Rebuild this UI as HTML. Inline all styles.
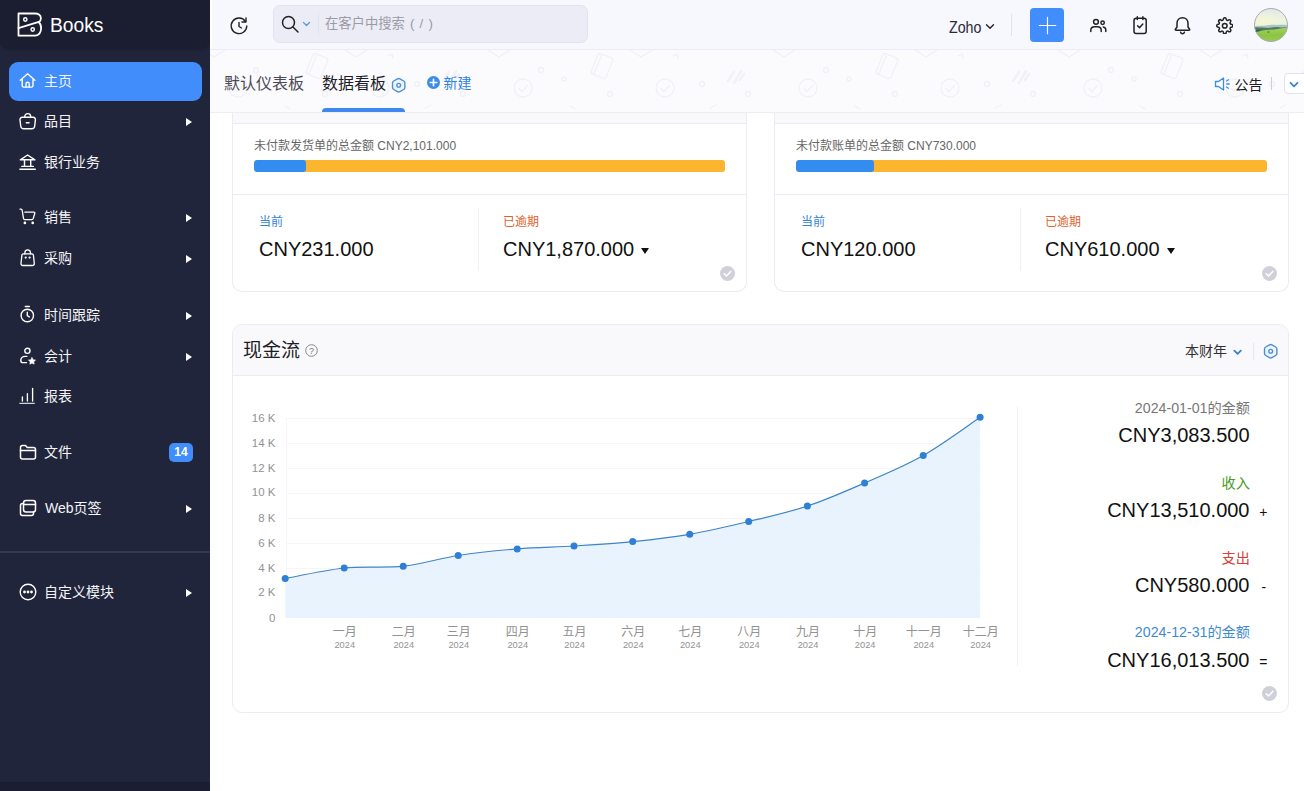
<!DOCTYPE html>
<html lang="zh-CN">
<head>
<meta charset="utf-8">
<title>Books</title>
<style>
*{box-sizing:border-box;margin:0;padding:0}
html,body{width:1304px;height:791px;overflow:hidden;background:#fff}
body{font-family:"Liberation Sans","Noto Sans CJK SC",sans-serif;color:#21263c;position:relative;font-size:13px}
.abs{position:absolute}
/* sidebar */
#side{position:absolute;left:0;top:0;width:210px;height:791px;background:#21253b}
#side .hd{position:absolute;left:0;top:0;width:210px;height:48px;background:#1b1d31;border-radius:0 0 8px 8px;box-shadow:0 1px 3px rgba(0,0,0,.25)}
#side .logo{position:absolute;left:17px;top:12px}
#side .brand{position:absolute;left:50.400px;top:12.500px;font-size:20px;line-height:24px;color:#fff;transform:scaleX(.962);transform-origin:0 0}
.mi{position:absolute;left:9px;width:193px;height:39px;border-radius:9px;color:#f4f4f8;font-size:14px;line-height:38px}
.mi.on{background:#408dfb}
.mi .ic{position:absolute;left:9px;top:9px;width:20px;height:20px}
.mi .tx{position:absolute;left:35px;top:0;white-space:nowrap}
.mi .ar{position:absolute;left:176.500px;top:16px;width:0;height:0;border-left:6px solid #fff;border-top:4px solid transparent;border-bottom:4px solid transparent}
.mi .bd{position:absolute;left:160px;top:9.700px;width:24px;height:19.500px;border-radius:5px;background:#408dfb;color:#fff;font-size:12px;font-weight:bold;line-height:19px;text-align:center}
#side .sep{position:absolute;left:0;top:551px;width:210px;height:2px;background:#353a53}
#side .ft{position:absolute;left:0;top:782px;width:210px;height:9px;background:#1b1d30}
/* topbar */
#top{position:absolute;left:210px;top:0;width:1094px;height:50px;background:#f7f7fe;border-bottom:1px solid #ececf6;box-shadow:inset 2px 0 0 #fff}
#search{position:absolute;left:63px;top:5px;width:315px;height:38px;background:#ececf7;border:1px solid #e2e2f0;border-radius:7px}
#search .ph{position:absolute;left:51px;top:0;line-height:36px;font-size:13.300px;color:#9a9aa3;white-space:nowrap;word-spacing:1.500px}
#search .dv{position:absolute;left:44px;top:7px;width:1px;height:22px;background:#e2e2ee}
/* tabbar */
#tabs{position:absolute;z-index:2;left:210px;top:50px;width:1094px;height:63px;background:#fbfbfe;border-bottom:1px solid #ededf4}
.tab{position:absolute;top:23px;font-size:16px;line-height:22px;white-space:nowrap;color:#444}
/* cards */
.card{position:absolute;background:#fff;border:1px solid #ebebf3;border-radius:0 0 10px 10px}
.lbl{position:absolute;font-size:12px;line-height:16px;white-space:nowrap}
.amt{position:absolute;font-size:20px;line-height:24px;white-space:nowrap;color:#111}
.bar{position:absolute;height:12px;background:#fbb52f;border-radius:3px;overflow:hidden}
.bar i{position:absolute;left:0;top:0;height:12px;background:#338cf0;display:block;border-radius:3px}
.chk{position:absolute;width:15px;height:15px}
.r{position:absolute;right:54px;white-space:nowrap;text-align:right}
</style>
</head>
<body>

<!-- ============ SIDEBAR ============ -->
<div id="side">
  <div class="hd">
    <svg class="logo" width="26" height="26" viewBox="0 0 26 26" fill="none" stroke="#fff" stroke-width="1.800" stroke-linejoin="round" stroke-linecap="round">
      <path d="M1.500 1.500H18C21.500 1.500 23.900 3.400 23.900 6.200C23.900 8 23.100 9.400 21.800 10.300C23.300 11.500 24.100 13.500 24.100 16.300C24.100 20.500 21.600 23.700 18.200 23.700H1.500z"/>
      <path d="M1.500 16.200 21.800 9.900"/>
      <circle cx="8.300" cy="7.500" r="1.650" stroke-width="1.500"/>
      <circle cx="15.700" cy="17.500" r="1.650" stroke-width="1.500"/>
    </svg>
    <div class="brand">Books</div>
  </div>

  <div class="mi on" style="top:62px"><svg class="ic" viewBox="0 0 20 20" fill="none" stroke="#fff" stroke-width="1.400" stroke-linejoin="round" stroke-linecap="round"><path d="M2.300 9.200 9.600 2.800l7.300 6.400M4.200 7.800v6.700c0 1 .6 1.600 1.600 1.600h7.600c1 0 1.600-.6 1.600-1.600V7.800"/><path d="M8 16v-3.200a1.600 1.600 0 0 1 3.200 0V16"/></svg><span class="tx">主页</span></div>

  <div class="mi" style="top:102px"><svg class="ic" viewBox="0 0 20 20" fill="none" stroke="#fff" stroke-width="1.400" stroke-linejoin="round" stroke-linecap="round"><path d="M4.300 6.300h10.800c1.500 0 2.400 1 2.300 2.400l-.7 6.300c-.2 1.700-1.300 2.800-3 2.800H5.700c-1.700 0-2.800-1.100-3-2.800L2 8.700C1.900 7.300 2.800 6.300 4.300 6.300z"/><path d="M6.600 6.300c0-2.300 1.300-3.700 3.100-3.700s3.100 1.400 3.100 3.700M8.300 11.800h2.800"/></svg><span class="tx">品目</span><span class="ar"></span></div>

  <div class="mi" style="top:143px"><svg class="ic" viewBox="0 0 20 20" fill="none" stroke="#fff" stroke-width="1.400" stroke-linejoin="round" stroke-linecap="round"><path d="M2.300 7.800 9.600 3l7.300 4.800zM1.900 17.200h15.400M6.500 8v6.300M12.700 8v6.300M3.800 14.400h11.600"/></svg><span class="tx">银行业务</span></div>

  <div class="mi" style="top:198px"><svg class="ic" viewBox="0 0 20 20" fill="none" stroke="#fff" stroke-width="1.300" stroke-linejoin="round" stroke-linecap="round"><path d="M2 2.200h1c.7 0 1.100.4 1.200 1.100l1.300 8.200c.1.700.6 1.100 1.300 1.100h7.100c.7 0 1.100-.4 1.300-1l1.600-5.400c.2-.7-.2-1.100-.9-1.100H6.800"/><circle cx="6.900" cy="15.900" r=".7"/><circle cx="14.700" cy="15.900" r=".7"/></svg><span class="tx">销售</span><span class="ar"></span></div>

  <div class="mi" style="top:239px"><svg class="ic" viewBox="0 0 20 20" fill="none" stroke="#fff" stroke-width="1.300" stroke-linejoin="round" stroke-linecap="round"><path d="M5.300 5.900h8.700c.8 0 1.300.5 1.400 1.200l.9 8.300c.1 1.300-.7 2.100-2 2.100H5c-1.300 0-2.100-.8-2-2.100l.9-8.300c.1-.7.600-1.200 1.400-1.200z"/><path d="M6.800 5.900v-.8c0-1.900 1.200-3.200 2.850-3.200s2.850 1.300 2.850 3.200v.8"/><circle cx="7.700" cy="9.600" r=".45" fill="#fff"/><circle cx="11.600" cy="9.600" r=".45" fill="#fff"/></svg><span class="tx">采购</span><span class="ar"></span></div>

  <div class="mi" style="top:296px"><svg class="ic" viewBox="0 0 20 20" fill="none" stroke="#fff" stroke-width="1.400" stroke-linejoin="round" stroke-linecap="round"><circle cx="9.300" cy="10.500" r="6.200"/><path d="M9.300 7.200v3.500l2 1.200M7.300 1.500h4"/></svg><span class="tx">时间跟踪</span><span class="ar"></span></div>

  <div class="mi" style="top:337px"><svg class="ic" viewBox="0 0 20 20" fill="none" stroke="#fff" stroke-width="1.400" stroke-linejoin="round" stroke-linecap="round"><circle cx="9.400" cy="4.800" r="2.600"/><path d="M8.800 10.400H7.200c-2.700 0-4.400 1.800-4.400 4 0 1.400.8 2.200 2.200 2.200h3.500"/><path d="M14 11.600l1.100 2.200 2.400.3-1.750 1.700.4 2.400-2.150-1.150-2.150 1.150.4-2.400-1.750-1.700 2.400-.3z" fill="#fff" stroke="#fff" stroke-width=".6"/></svg><span class="tx">会计</span><span class="ar"></span></div>

  <div class="mi" style="top:377px"><svg class="ic" viewBox="0 0 20 20" fill="none" stroke="#fff" stroke-width="1.350" stroke-linecap="round"><path d="M4.400 10.800v4.200M9.400 7.700v7.300M14.600 2.400v12.600"/><path d="M1.800 17.300h14.600" stroke-width="1"/></svg><span class="tx">报表</span></div>

  <div class="mi" style="top:433px"><svg class="ic" viewBox="0 0 20 20" fill="none" stroke="#fff" stroke-width="1.500" stroke-linejoin="round" stroke-linecap="round"><path d="M2.500 8.500V5.500c0-1.200.8-2 2-2h3l1.800 2h6.200c1.200 0 2 .8 2 2v7.500c0 1.200-.8 2-2 2h-11c-1.200 0-2-.8-2-2z"/><path d="M2.500 8.500h15"/></svg><span class="tx">文件</span><span class="bd">14</span></div>

  <div class="mi" style="top:489px"><svg class="ic" viewBox="0 0 20 20" fill="none" stroke="#fff" stroke-width="1.500" stroke-linejoin="round" stroke-linecap="round"><rect x="5.500" y="2.500" width="12" height="11.500" rx="2.500"/><path d="M5.500 6.500h12M5.500 5.500h-1c-1.200 0-2 .8-2 2v8c0 1.200.8 2 2 2h9c1.200 0 2-.8 2-2v-1.500"/></svg><span class="tx" style="left:36px">Web页签</span><span class="ar"></span></div>

  <div class="sep"></div>

  <div class="mi" style="top:573px"><svg class="ic" viewBox="0 0 20 20" fill="none" stroke="#fff" stroke-width="1.400" stroke-linejoin="round" stroke-linecap="round"><circle cx="10" cy="10" r="7.800"/><circle cx="6.500" cy="10" r=".7" fill="#fff"/><circle cx="10" cy="10" r=".7" fill="#fff"/><circle cx="13.500" cy="10" r=".7" fill="#fff"/></svg><span class="tx">自定义模块</span><span class="ar"></span></div>

  <div class="ft"></div>
</div>

<!-- ============ TOPBAR ============ -->
<div id="top">
  <svg class="abs" style="left:19px;top:16px" width="20" height="20" viewBox="0 0 20 20" fill="none" stroke="#222" stroke-width="1.400" stroke-linecap="round" stroke-linejoin="round"><path d="M16.500 5.500A7.800 7.800 0 1 0 17.800 10"/><path d="M17 2v4h-4M10 6.500V10.500l2.500 1.500"/></svg>
  <div id="search">
    <svg class="abs" style="left:6px;top:8px" width="20" height="20" viewBox="0 0 20 20" fill="none" stroke="#222" stroke-width="1.500" stroke-linecap="round"><circle cx="8.500" cy="8.500" r="6"/><path d="M13 13l5 5"/></svg>
    <svg class="abs" style="left:28px;top:15px" width="9" height="7" viewBox="0 0 9 7" fill="none" stroke="#5b9bdc" stroke-width="1.400" stroke-linecap="round" stroke-linejoin="round"><path d="M1.500 1.500l3 3 3-3"/></svg>
    <div class="dv"></div>
    <div class="ph">在客户中搜索 ( / )</div>
  </div>
  <div class="abs" style="left:739px;top:17.500px;font-size:16px;line-height:20px;color:#2a2a33;white-space:nowrap;transform:scaleX(.89);transform-origin:0 0">Zoho</div>
  <svg class="abs" style="left:775px;top:23px" width="10" height="8" viewBox="0 0 10 8" fill="none" stroke="#222" stroke-width="1.400" stroke-linecap="round" stroke-linejoin="round"><path d="M1.500 1.800l3.500 3.500 3.500-3.500"/></svg>
  <div class="abs" style="left:801px;top:14px;width:1px;height:22px;background:#e3e3ee"></div>
  <div class="abs" style="left:820px;top:8px;width:34px;height:34px;border-radius:4px;background:#408dfb">
    <svg class="abs" style="left:6.500px;top:6.500px" width="21" height="21" viewBox="0 0 21 21" stroke="#fff" stroke-width="1.150" stroke-linecap="round"><path d="M10.500 2.200v16.600M2.200 10.500h16.600"/></svg>
  </div>
  <!-- users -->
  <svg class="abs" style="left:878px;top:15px" width="20" height="20" viewBox="0 0 20 20" fill="none" stroke="#222" stroke-width="1.500" stroke-linecap="round" stroke-linejoin="round"><circle cx="8" cy="6.800" r="2.400"/><path d="M2.800 16.500v-1.200c0-2.100 1.700-3.600 3.800-3.600h2.800c2.100 0 3.800 1.500 3.800 3.600v1.200"/><circle cx="14.600" cy="7.800" r="1.700"/><path d="M15.300 12c1.500.3 2.500 1.400 2.500 2.900v1.600"/></svg>
  <!-- clipboard -->
  <svg class="abs" style="left:920px;top:14px" width="20" height="22" viewBox="0 0 20 22" fill="none" stroke="#222" stroke-width="1.500" stroke-linecap="round" stroke-linejoin="round"><rect x="4" y="4.300" width="12.200" height="15.200" rx="2.300"/><path d="M7.300 2.800v2.600M12.900 2.800v2.600M7.600 11.800l1.900 1.900 3.300-3.700"/></svg>
  <!-- bell -->
  <svg class="abs" style="left:962px;top:14px" width="20" height="22" viewBox="0 0 20 22" fill="none" stroke="#222" stroke-width="1.500" stroke-linecap="round" stroke-linejoin="round"><path d="M5 13V9.500c0-3.300 2.200-5.800 5.500-5.800S16 6.200 16 9.500V13l1.600 2.200c.3.500 0 1-.6 1H4c-.6 0-.9-.5-.6-1z"/><path d="M8.600 18.200c.3 1 1 1.500 1.900 1.500s1.600-.5 1.900-1.500"/></svg>
  <!-- gear -->
  <svg class="abs" style="left:1005.500px;top:16.500px" width="17.500" height="17.500" viewBox="0 0 24 24" fill="none" stroke="#222" stroke-width="2.050" stroke-linecap="round" stroke-linejoin="round"><circle cx="12" cy="12" r="3.200"/><path d="M19.400 15a1.650 1.650 0 0 0 .33 1.820l.06.06a2 2 0 1 1-2.830 2.830l-.06-.06a1.650 1.650 0 0 0-1.820-.33 1.650 1.650 0 0 0-1 1.510V21a2 2 0 0 1-4 0v-.09A1.650 1.650 0 0 0 9 19.400a1.650 1.650 0 0 0-1.820.33l-.06.06a2 2 0 1 1-2.830-2.830l.06-.06a1.650 1.650 0 0 0 .33-1.820 1.650 1.650 0 0 0-1.510-1H3a2 2 0 0 1 0-4h.09A1.650 1.650 0 0 0 4.600 9a1.650 1.650 0 0 0-.33-1.820l-.06-.06a2 2 0 1 1 2.830-2.830l.06.06a1.650 1.650 0 0 0 1.820.33H9a1.650 1.650 0 0 0 1-1.510V3a2 2 0 0 1 4 0v.09a1.650 1.650 0 0 0 1 1.510 1.650 1.650 0 0 0 1.820-.33l.06-.06a2 2 0 1 1 2.830 2.830l-.06.06a1.650 1.650 0 0 0-.33 1.820V9a1.650 1.650 0 0 0 1.510 1H21a2 2 0 0 1 0 4h-.09a1.650 1.650 0 0 0-1.510 1z"/></svg>
  <!-- avatar -->
  <svg class="abs" style="left:1044px;top:7.500px" width="34" height="34" viewBox="0 0 34 34">
    <defs>
      <clipPath id="avc"><circle cx="17" cy="17" r="16.500"/></clipPath>
      <linearGradient id="sky" x1="0" y1="0" x2="0" y2="1"><stop offset="0" stop-color="#dfe8ec"/><stop offset=".55" stop-color="#eef3de"/><stop offset="1" stop-color="#e6efe2"/></linearGradient>
      <linearGradient id="grs" x1="0" y1="0" x2="0" y2="1"><stop offset="0" stop-color="#a6d25c"/><stop offset=".5" stop-color="#8cc443"/><stop offset="1" stop-color="#9fcd58"/></linearGradient>
      <radialGradient id="sun" cx=".3" cy=".8" r=".6"><stop offset="0" stop-color="#f6f7cf" stop-opacity=".9"/><stop offset="1" stop-color="#f6f7cf" stop-opacity="0"/></radialGradient>
    </defs>
    <g clip-path="url(#avc)">
      <rect width="34" height="20" fill="url(#sky)"/>
      <rect width="34" height="20" fill="url(#sun)"/>
      <g transform="translate(0,1.200)">
      <path d="M0 17.500c4-1.200 7-.6 10-.9s6-1.300 10-1 8-.4 14 .4V21H0z" fill="#a9c4c8"/>
      <path d="M0 18.200c3-.6 5 .2 8 .1s5 .6 8 .3 6-1 9-.6 5 .2 9-.2V23H0z" fill="#4d7a5e"/>
      <path d="M0 24c5-2.500 10-3.200 16-3.500s12-1.300 18-2.500V34H0z" fill="url(#grs)"/>
      <path d="M0 21.500c2-.8 5-1 8-.9l-8 3z" fill="#2f6048"/>
      <rect x="13.500" y="22.300" width="1.800" height="1" fill="#3c5a3a"/>
      </g>
    </g>
    <circle cx="17" cy="17" r="16.500" fill="none" stroke="#a9abb3" stroke-width="1"/>
  </svg>
</div>

<!-- ============ TAB BAR ============ -->
<div id="tabs">
  <svg class="abs" style="left:0;top:0" width="1094" height="62" viewBox="0 0 1094 62" fill="none" stroke="#f0f0f7" stroke-width="1.300" stroke-linecap="round" stroke-linejoin="round">
    <defs>
      <pattern id="doodle" x="-25" y="0" width="285" height="62" patternUnits="userSpaceOnUse">
        <circle cx="53" cy="38" r="9"/><path d="M49 38.500l3 3 5.500-6"/>
        <circle cx="195" cy="38" r="9"/><path d="M191 38.500l3 3 5.500-6"/>
        <path d="M15 -2l14 9 14-9M157 -2l14 9 14-9"/>
        <rect x="124" y="5" width="16" height="22" rx="2.500" transform="rotate(22 132 16)"/><path d="M127.500 6.500v20" transform="rotate(22 132 16)"/>
        <circle cx="71" cy="20" r="2.500"/><circle cx="140" cy="44" r="2.500"/><circle cx="232" cy="34" r="2.500"/><circle cx="278" cy="44" r="2.500"/><circle cx="94" cy="29" r="2"/>
        <path d="M258 31l6-9M264 33l7-12M270 30l4-6" stroke-width="2.600" stroke="#f1f1f8"/>
        <path d="M203 6l4-2 1 4M100 56l5 3M240 58l6-3"/>
      </pattern>
    </defs>
    <rect width="1094" height="62" fill="url(#doodle)" stroke="none"/>
  </svg>
    <div class="tab" style="left:14px;color:#4a4a55">默认仪表板</div>
  <div class="tab" style="left:112px;color:#1d1d28">数据看板</div>
  <svg class="abs" style="left:180.500px;top:26.500px" width="15.400" height="16.500" viewBox="0 0 14 15" fill="none" stroke="#4a8fd6" stroke-width="1.250" stroke-linejoin="round"><path d="M5.92 1.62Q7.00 1.00 8.08 1.62L11.55 3.62Q12.63 4.25 12.63 5.50L12.63 9.50Q12.63 10.75 11.55 11.37L8.08 13.38Q7.00 14.00 5.92 13.38L2.45 11.38Q1.37 10.75 1.37 9.50L1.37 5.50Q1.37 4.25 2.45 3.62z" fill="#edf4fd"/><circle cx="7" cy="7.500" r="1.700" fill="#f9f9fb"/></svg>
  <div class="abs" style="left:112px;top:58px;width:83px;height:4px;background:#3f87ee;border-radius:4px 4px 0 0"></div>
  <svg class="abs" style="left:216.500px;top:25.500px" width="13" height="13" viewBox="0 0 12 12"><circle cx="6" cy="6" r="6" fill="#3b8de8"/><path d="M6 3v6M3 6h6" stroke="#fff" stroke-width="1.500" stroke-linecap="round"/></svg>
  <div class="abs" style="left:233.500px;top:22.500px;font-size:14px;line-height:20px;color:#2e83e0;white-space:nowrap">新建</div>

  <svg class="abs" style="left:1004px;top:26px" width="18" height="16" viewBox="0 0 18 16" fill="none" stroke="#3b8de8" stroke-width="1.300" stroke-linejoin="round" stroke-linecap="round"><path d="M1.500 5.500h3l5-3.500v12l-5-3.500h-3z"/><path d="M12.500 5l2-1.200M12.800 8h2.400M12.500 11l2 1.200"/></svg>
  <div class="abs" style="left:1024.500px;top:25px;font-size:14px;line-height:20px;color:#1d1d28;white-space:nowrap">公告</div>
  <div class="abs" style="left:1060.500px;top:27px;width:1px;height:13px;background:#cfcfda"></div>
  <div class="abs" style="left:1073.500px;top:23px;width:30px;height:21px;border:1px solid #e2e2ec;border-radius:4px;background:#fff"></div>
  <svg class="abs" style="left:1079px;top:30.500px" width="10" height="8" viewBox="0 0 10 8" fill="none" stroke="#3a87c9" stroke-width="1.800" stroke-linecap="round" stroke-linejoin="round"><path d="M1.500 1.800l3.500 3.500 3.500-3.500"/></svg>
</div>

<!-- ============ CARD 1 ============ -->
<div class="card" style="left:232px;top:111px;width:515px;height:181px;border-top:0">
  <div class="abs" style="left:0;top:0;width:513px;height:13px;background:#f9f9fb;border-bottom:1px solid #ebebf3"></div>
  <div class="lbl" style="left:21px;top:27px;color:#666">未付款发货单的总金额 CNY2,101.000</div>
  <div class="bar" style="left:21px;top:49px;width:471px"><i style="width:52px"></i></div>
  <div class="abs" style="left:0;top:83px;width:513px;height:1px;background:#ebebf3"></div>
  <div class="lbl" style="left:26px;top:103px;color:#3585d6">当前</div>
  <div class="amt" style="left:26px;top:126px">CNY231.000</div>
  <div class="abs" style="left:245px;top:97px;width:1px;height:63px;background:#efeff4"></div>
  <div class="lbl" style="left:270px;top:103px;color:#e0622e">已逾期</div>
  <div class="amt" style="left:270px;top:126px">CNY1,870.000</div>
  <div class="abs" style="left:408px;top:137px;width:0;height:0;border-top:6px solid #111;border-left:4px solid transparent;border-right:4px solid transparent"></div>
  <svg class="chk" style="left:487px;top:155px" viewBox="0 0 15 15"><circle cx="7.500" cy="7.500" r="7.500" fill="#d0d0da"/><path d="M4.200 7.800l2.300 2.200 4.300-4.600" fill="none" stroke="#fff" stroke-width="1.500" stroke-linecap="round" stroke-linejoin="round"/></svg>
</div>

<!-- ============ CARD 2 ============ -->
<div class="card" style="left:774px;top:111px;width:515px;height:181px;border-top:0">
  <div class="abs" style="left:0;top:0;width:513px;height:13px;background:#f9f9fb;border-bottom:1px solid #ebebf3"></div>
  <div class="lbl" style="left:21px;top:27px;color:#666">未付款账单的总金额 CNY730.000</div>
  <div class="bar" style="left:21px;top:49px;width:471px"><i style="width:78px"></i></div>
  <div class="abs" style="left:0;top:83px;width:513px;height:1px;background:#ebebf3"></div>
  <div class="lbl" style="left:26px;top:103px;color:#3585d6">当前</div>
  <div class="amt" style="left:26px;top:126px">CNY120.000</div>
  <div class="abs" style="left:245px;top:97px;width:1px;height:63px;background:#efeff4"></div>
  <div class="lbl" style="left:270px;top:103px;color:#e0622e">已逾期</div>
  <div class="amt" style="left:270px;top:126px">CNY610.000</div>
  <div class="abs" style="left:392px;top:137px;width:0;height:0;border-top:6px solid #111;border-left:4px solid transparent;border-right:4px solid transparent"></div>
  <svg class="chk" style="left:487px;top:155px" viewBox="0 0 15 15"><circle cx="7.500" cy="7.500" r="7.500" fill="#d0d0da"/><path d="M4.200 7.800l2.300 2.200 4.300-4.600" fill="none" stroke="#fff" stroke-width="1.500" stroke-linecap="round" stroke-linejoin="round"/></svg>
</div>

<!-- ============ CASH FLOW ============ -->
<div class="card" style="left:232px;top:324px;width:1057px;height:389px;border-radius:10px">
  <div class="abs" style="left:0;top:0;width:1055px;height:51px;background:#f9f9fb;border-bottom:1px solid #ebebf3;border-radius:9px 9px 0 0"></div>
  <div class="abs" style="left:10px;top:12px;font-size:19px;line-height:28px;color:#1d1d28;white-space:nowrap">现金流</div>
  <svg class="abs" style="left:72px;top:19px" width="13" height="13" viewBox="0 0 13 13" fill="none" stroke="#888" stroke-width="1"><circle cx="6.500" cy="6.500" r="5.800"/><text x="6.500" y="9.600" font-size="9" text-anchor="middle" fill="#777" stroke="none" font-family="Liberation Sans, sans-serif">?</text></svg>
  <div class="abs" style="left:952px;top:16px;font-size:14px;line-height:20px;color:#333;white-space:nowrap">本财年</div>
  <svg class="abs" style="left:999.500px;top:24px" width="9.200" height="7.400" viewBox="0 0 10 8" fill="none" stroke="#3a84cc" stroke-width="2" stroke-linecap="round" stroke-linejoin="round"><path d="M1.500 1.800l3.500 3.500 3.500-3.500"/></svg>
  <div class="abs" style="left:1020px;top:18px;width:1px;height:17px;background:#e6e6ee"></div>
  <svg class="abs" style="left:1029.800px;top:18.300px" width="15.400" height="16.500" viewBox="0 0 14 15" fill="none" stroke="#4a8fd6" stroke-width="1.250" stroke-linejoin="round"><path d="M5.92 1.62Q7.00 1.00 8.08 1.62L11.55 3.62Q12.63 4.25 12.63 5.50L12.63 9.50Q12.63 10.75 11.55 11.37L8.08 13.38Q7.00 14.00 5.92 13.38L2.45 11.38Q1.37 10.75 1.37 9.50L1.37 5.50Q1.37 4.25 2.45 3.62z" fill="#edf4fd"/><circle cx="7" cy="7.500" r="1.700" fill="#f9f9fb"/></svg>

  <!-- chart -->
  <svg class="abs" style="left:0;top:60px" width="800" height="290" viewBox="232 384 800 290" font-family="Liberation Sans, Noto Sans CJK SC, sans-serif">
    <g stroke="#f6f6fa" stroke-width="1"><path d="M285 417.5H980M285 442.5H980M285 467.5H980M285 492.5H980M285 517.5H980M285 542.5H980M285 567.5H980M285 592.5H980M285.500 417V617"/></g>
    <path d="M284.2 577.6C294.0 575.8 323.5 569.1 343.2 567.0C362.9 564.9 383.2 567.3 402.2 565.2C421.2 563.1 438.2 557.4 457.2 554.5C476.2 551.6 496.9 549.5 516.2 547.9C535.5 546.3 553.8 546.2 573.0 545.0C592.2 543.8 612.4 542.6 631.7 540.6C651.0 538.6 669.4 536.6 688.7 533.3C708.0 529.9 728.1 525.2 747.7 520.5C767.3 515.8 787.1 511.5 806.4 505.1C825.7 498.7 844.3 490.4 863.6 482.0C882.9 473.6 903.0 465.4 922.2 454.5C941.5 443.6 969.6 422.7 979.1 416.3V617H284.2z" fill="#e9f3fd"/>
    <path d="M284.2 577.6C294.0 575.8 323.5 569.1 343.2 567.0C362.9 564.9 383.2 567.3 402.2 565.2C421.2 563.1 438.2 557.4 457.2 554.5C476.2 551.6 496.9 549.5 516.2 547.9C535.5 546.3 553.8 546.2 573.0 545.0C592.2 543.8 612.4 542.6 631.7 540.6C651.0 538.6 669.4 536.6 688.7 533.3C708.0 529.9 728.1 525.2 747.7 520.5C767.3 515.8 787.1 511.5 806.4 505.1C825.7 498.7 844.3 490.4 863.6 482.0C882.9 473.6 903.0 465.4 922.2 454.5C941.5 443.6 969.6 422.7 979.1 416.3" fill="none" stroke="#3d85c9" stroke-width="1.200"/>
    <g fill="#2f7fd6"><circle cx="284.2" cy="577.6" r="3.500"/><circle cx="343.2" cy="567.0" r="3.500"/><circle cx="402.2" cy="565.2" r="3.500"/><circle cx="457.2" cy="554.5" r="3.500"/><circle cx="516.2" cy="547.9" r="3.500"/><circle cx="573.0" cy="545.0" r="3.500"/><circle cx="631.7" cy="540.6" r="3.500"/><circle cx="688.7" cy="533.3" r="3.500"/><circle cx="747.7" cy="520.5" r="3.500"/><circle cx="806.4" cy="505.1" r="3.500"/><circle cx="863.6" cy="482.0" r="3.500"/><circle cx="922.2" cy="454.5" r="3.500"/><circle cx="979.1" cy="416.3" r="3.500"/></g>
    <g font-size="11.500" fill="#929292" text-anchor="end"><text x="274.500" y="420.8">16 K</text><text x="274.500" y="445.8">14 K</text><text x="274.500" y="470.8">12 K</text><text x="274.500" y="495.3">10 K</text><text x="274.500" y="520.8">8 K</text><text x="274.500" y="545.8">6 K</text><text x="274.500" y="570.8">4 K</text><text x="274.500" y="595.3">2 K</text><text x="274.500" y="620.8">0</text></g>
    <g font-size="12" fill="#929292" text-anchor="middle"><text x="343.8" y="635">一月</text><text x="402.8" y="635">二月</text><text x="457.8" y="635">三月</text><text x="516.8" y="635">四月</text><text x="573.6" y="635">五月</text><text x="632.3" y="635">六月</text><text x="689.3" y="635">七月</text><text x="748.3" y="635">八月</text><text x="807.0" y="635">九月</text><text x="864.2" y="635">十月</text><text x="922.8" y="635">十一月</text><text x="979.7" y="635">十二月</text></g>
    <g font-size="9.300" fill="#929292" text-anchor="middle"><text x="343.8" y="646.800">2024</text><text x="402.8" y="646.800">2024</text><text x="457.8" y="646.800">2024</text><text x="516.8" y="646.800">2024</text><text x="573.6" y="646.800">2024</text><text x="632.3" y="646.800">2024</text><text x="689.3" y="646.800">2024</text><text x="748.3" y="646.800">2024</text><text x="807.0" y="646.800">2024</text><text x="864.2" y="646.800">2024</text><text x="922.8" y="646.800">2024</text><text x="979.7" y="646.800">2024</text></g>
  </svg>
  <div class="abs" style="left:784px;top:82px;width:1px;height:259px;background:#efeff4"></div>

  <!-- summary -->
  <div class="r" style="top:74px;right:38px;font-size:14.200px;line-height:18px;color:#777">2024-01-01的金额</div>
  <div class="r amt" style="top:98px;right:38.500px;left:auto">CNY3,083.500</div>
  <div class="r" style="top:149px;right:38px;font-size:14.200px;line-height:18px;color:#4a9b1f">收入</div>
  <div class="r amt" style="top:173px;right:38.500px;left:auto">CNY13,510.000</div>
  <div class="abs" style="left:1026.300px;top:178.500px;font-size:14px;line-height:16px;color:#111">+</div>
  <div class="r" style="top:224px;right:38px;font-size:14.200px;line-height:18px;color:#d6403a">支出</div>
  <div class="r amt" style="top:248px;right:38.500px;left:auto">CNY580.000</div>
  <div class="abs" style="left:1028.600px;top:253.500px;font-size:14px;line-height:16px;color:#111">-</div>
  <div class="r" style="top:298px;right:38px;font-size:14.200px;line-height:18px;color:#3f8ad2">2024-12-31的金额</div>
  <div class="r amt" style="top:323px;right:38.500px;left:auto">CNY16,013.500</div>
  <div class="abs" style="left:1026.300px;top:328.500px;font-size:14px;line-height:16px;color:#111">=</div>
  <svg class="chk" style="left:1029px;top:361px" viewBox="0 0 15 15"><circle cx="7.500" cy="7.500" r="7.500" fill="#d0d0da"/><path d="M4.200 7.800l2.300 2.200 4.300-4.600" fill="none" stroke="#fff" stroke-width="1.500" stroke-linecap="round" stroke-linejoin="round"/></svg>
</div>

</body>
</html>
